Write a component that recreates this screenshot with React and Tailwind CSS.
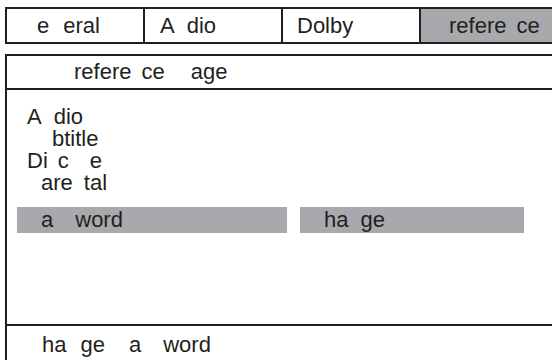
import React from "react";

const Sp = ({ w }) => <span className={`inline-block ${w}`}> </span>;

export default function App() {
  return (
    <div className="w-[552px] h-[360px] overflow-hidden bg-white font-['Liberation_Sans',Arial,sans-serif] text-[22px] text-[#231f20] whitespace-pre">
      {/* Tab bar */}
      <div className="flex pt-[7px] pl-[5px] w-[700px]">
        <div className="w-[138px] h-[37px] border-y-2 border-l-2 border-[#231f20] pl-[14px] leading-[33px]">
          <Sp w="w-[16px]" />e<Sp w="w-[14px]" />eral
        </div>
        <div className="w-[138px] h-[37px] border-y-2 border-l-2 border-[#231f20] pl-[15px] leading-[33px]">
          A<Sp w="w-[12px]" />dio
        </div>
        <div className="w-[138px] h-[37px] border-y-2 border-l-2 border-[#231f20] pl-[14px] leading-[33px]">
          Dolby
        </div>
        <div className="w-[138px] h-[37px] border-y-2 border-x-2 border-[#231f20] bg-[#a7a9ac] pl-[14px] leading-[33px]">
          <Sp w="w-[14px]" />refere<Sp w="w-[10px]" />ce
        </div>
      </div>

      {/* Panel */}
      <div className="mt-[10px] ml-[5px] w-[600px] border-l-2 border-t-2 border-[#231f20]">
        <div className="h-[34px] border-b-2 border-[#231f20] pl-[53px] leading-[32px]">
          <Sp w="w-[14px]" />refere<Sp w="w-[10px]" />ce<Sp w="w-[26px]" />age
        </div>
        <div className="h-[236px] border-b-2 border-[#231f20] pt-[16px] pl-[10px]">
          <div className="leading-[22px] pl-[10px]">
            A<Sp w="w-[12px]" />dio
          </div>
          <div className="leading-[22px] pl-[10px]">
            <Sp w="w-[25px]" />btitle
          </div>
          <div className="leading-[22px] pl-[10px]">
            Di<Sp w="w-[10px]" />c<Sp w="w-[21px]" />e
          </div>
          <div className="leading-[22px] pl-[10px]">
            <Sp w="w-[14px]" />are<Sp w="w-[11px]" />tal
          </div>
          <div className="flex gap-[13px] mt-[13px]">
            <div className="w-[270px] h-[26px] bg-[#a7a9ac] pl-[10px] leading-[26px]">
              <Sp w="w-[14px]" />a<Sp w="w-[22px]" />word
            </div>
            <div className="w-[224px] h-[26px] bg-[#a7a9ac] pl-[9px] leading-[26px]">
              <Sp w="w-[15px]" />ha<Sp w="w-[12px]" />ge
            </div>
          </div>
        </div>
        <div className="h-[34px] pl-[20px] pt-[2px] leading-[34px]">
          <Sp w="w-[15px]" />ha<Sp w="w-[14px]" />ge<Sp w="w-[24px]" />a<Sp w="w-[22px]" />word
        </div>
      </div>
    </div>
  );
}
